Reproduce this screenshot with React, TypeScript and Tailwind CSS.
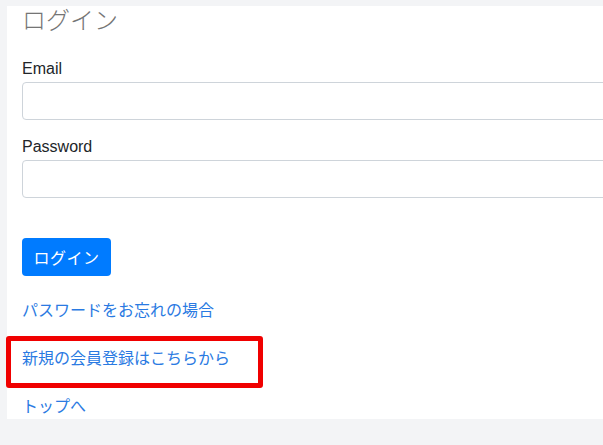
export default function App() {
  const jp = { fontFamily: '"Noto Sans CJK JP", "Liberation Sans", sans-serif' };
  return (
    <div className="h-[445px] w-full overflow-hidden bg-[#f3f4f6] pl-[7px] pt-[6px]">
      <div
        className="relative h-[413px] w-[720px] bg-white pl-[15px] text-[#212529]"
        style={{ fontFamily: '"Liberation Sans", "Noto Sans CJK JP", sans-serif' }}
      >
        <h3 className="text-[24px] leading-[26px] font-light text-[#757575]" style={jp}>
          ログイン
        </h3>

        <label className="mt-[25px] block text-[16px] leading-[24px]">Email</label>
        <input
          type="email"
          className="mt-[1px] block h-[38px] w-[660px] rounded-[4px] border border-[#ced4da] bg-white"
        />

        <label className="mt-[15px] block text-[16px] leading-[24px]">Password</label>
        <input
          type="password"
          className="mt-[1px] block h-[38px] w-[660px] rounded-[4px] border border-[#ced4da] bg-white"
        />

        <button
          className="mt-[40px] block h-[38px] w-[89px] rounded-[4px] bg-[#007bff] text-[16px] leading-[24px] tracking-[0.5px] text-white"
          style={jp}
        >
          ログイン
        </button>

        <div className="mt-[21px] flex flex-col items-start gap-[24px] text-[16px] leading-[24px] text-[#2a7ae2]" style={jp}>
          <a href="#">パスワードをお忘れの場合</a>
          <a href="#">新規の会員登録はこちらから</a>
          <a href="#">トップへ</a>
        </div>

        {/* annotation box */}
        <div className="pointer-events-none absolute left-[-1px] top-[330px] h-[52px] w-[257px] rounded-[3px] border-[5px] border-[#f00000]" />
      </div>
    </div>
  );
}
